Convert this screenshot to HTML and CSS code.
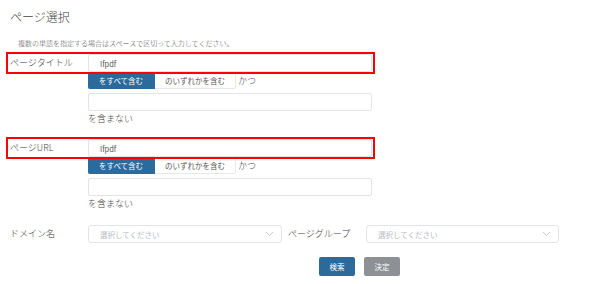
FILE: index.html
```html
<!DOCTYPE html>
<html lang="ja">
<head>
<meta charset="utf-8">
<title>ページ選択</title>
<link rel="stylesheet" href="styles.css">
</head>
<body>
<div class="page">
  <h1 class="title">ページ選択</h1>
  <p class="note">複数の単語を指定する場合はスペースで区切って入力してください。</p>

  <div class="block">
    <div class="row highlight">
      <label class="label">ページタイトル</label>
      <div class="input"><span class="value">lfpdf</span></div>
    </div>
    <div class="sub">
      <div class="seg-line">
        <div class="seg">
          <span class="seg-btn active">をすべて含む</span>
          <span class="seg-btn">のいずれかを含む</span>
        </div>
        <span class="text">かつ</span>
      </div>
      <div class="input wide"></div>
      <div class="text after">を含まない</div>
    </div>
  </div>

  <div class="block second">
    <div class="row highlight">
      <label class="label">ページURL</label>
      <div class="input"><span class="value">lfpdf</span></div>
    </div>
    <div class="sub">
      <div class="seg-line">
        <div class="seg">
          <span class="seg-btn active">をすべて含む</span>
          <span class="seg-btn">のいずれかを含む</span>
        </div>
        <span class="text">かつ</span>
      </div>
      <div class="input wide"></div>
      <div class="text after">を含まない</div>
    </div>
  </div>

  <div class="select-row">
    <label class="label">ドメイン名</label>
    <div class="select">
      <span class="placeholder">選択してください</span>
      <svg class="chev" width="9" height="6" viewBox="0 0 9 6"><path d="M1 1 L4.5 4.5 L8 1" fill="none" stroke="#c0c4cc" stroke-width="0.9"/></svg>
    </div>
    <label class="label label2">ページグループ</label>
    <div class="select">
      <span class="placeholder">選択してください</span>
      <svg class="chev" width="9" height="6" viewBox="0 0 9 6"><path d="M1 1 L4.5 4.5 L8 1" fill="none" stroke="#c0c4cc" stroke-width="0.9"/></svg>
    </div>
  </div>

  <div class="actions">
    <button class="btn primary">検索</button>
    <button class="btn muted">決定</button>
  </div>
</div>
</body>
</html>
```

FILE: styles.css
```css
* { box-sizing: border-box; }
html, body { margin: 0; padding: 0; background: #fff; }
body {
  font-family: "Noto Sans CJK JP", "Noto Sans", sans-serif;
  color: #555;
  width: 600px;
  height: 284px;
  overflow: hidden;
}
.page { padding: 0 0 0 8px; }
.title {
  margin: 0;
  padding: 8px 0 0 2px;
  font-size: 12px;
  line-height: 18px;
  font-weight: 300;
  color: #444;
}
.note {
  margin: 12px 0 0 10px;
  font-size: 7px;
  line-height: 10px;
  color: #555;
  font-weight: 300;
}
.block { margin-top: 6px; }
.block.second { margin-top: 13px; }
.row {
  display: flex;
  align-items: center;
  width: 365px;
  height: 18px;
}
.highlight { outline: 2px solid #ff0000; }
.label {
  width: 80px;
  padding-left: 2px;
  font-size: 9px;
  line-height: 18px;
  color: #444;
  font-weight: 300;
  flex: none;
}
.input {
  width: 284px;
  height: 18px;
  border: 1px solid #e2e4e8;
  border-radius: 2px;
  background: #fff;
  display: flex;
  align-items: center;
  padding-left: 11px;
}
.value { font-size: 7.5px; color: #555; }
.sub { margin-left: 80px; }
.seg-line { display: flex; align-items: center; height: 17px; }
.seg { display: flex; height: 17px; }
.seg-btn {
  display: flex;
  align-items: center;
  justify-content: center;
  font-size: 7.5px;
  height: 17px;
  color: #555;
  background: #fff;
  border: 1px solid #e6e8eb;
  border-left: none;
  width: 81px;
  border-radius: 0 2px 2px 0;
}
.seg-btn.active {
  width: 67px;
  background: #2d6a9c;
  border-color: #2d6a9c;
  color: #fff;
  border-radius: 2px 0 0 2px;
}
.text { font-size: 9px; color: #444; font-weight: 300; }
.seg-line .text { margin-left: 2px; line-height: 17px; }
.input.wide { margin-top: 4px; }
.after { margin-top: 1px; line-height: 14px; }
.select-row {
  display: flex;
  align-items: center;
  margin-top: 14px;
  height: 18px;
}
.select {
  width: 194px;
  height: 18px;
  border: 1px solid #e2e4e8;
  border-radius: 3px;
  display: flex;
  align-items: center;
  justify-content: space-between;
  padding: 0 7px 0 11px;
}
.placeholder { font-size: 7.5px; color: #b8bcc4; }
.chev { display: block; }
.label2 { width: 80px; margin-left: 4px; }
.select-row .select:last-child { width: 193px; }
.actions {
  display: flex;
  gap: 9px;
  margin: 14px 0 0 311px;
}
.btn {
  width: 36px;
  height: 19px;
  border: none;
  border-radius: 2px;
  font-family: inherit;
  font-size: 7.5px;
  color: #fff;
  padding: 0;
}
.btn.primary { background: #2d6a9c; }
.btn.muted { background: #8d9094; }
```
